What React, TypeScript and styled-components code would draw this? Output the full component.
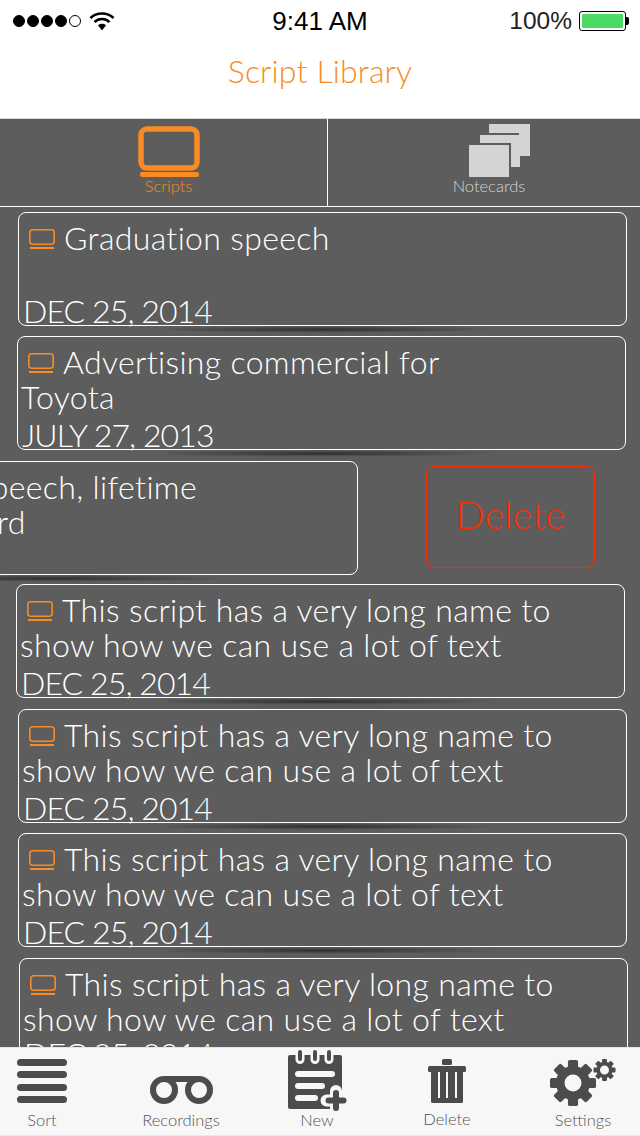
import React from 'react'
import styled, { createGlobalStyle } from 'styled-components'

const ORANGE = '#f88b24'
const GREY = '#5d5d5d'
const ICON = '#4c4c4c'
const FOOTER = '#f7f7f7'

const GlobalStyle = createGlobalStyle`
  html, body {
    margin: 0;
    padding: 0;
    background: #ffffff;
    overflow: hidden;
  }
  * {
    box-sizing: border-box;
  }
`

const Page = styled.div`
  display: flex;
  flex-direction: column;
  width: 640px;
  height: 1136px;
  overflow: hidden;
  font-family: Lato, 'Open Sans', sans-serif;
  font-weight: 300;
`

const StatusBar = styled.div`
  display: grid;
  grid-template-columns: 1fr auto 1fr;
  align-items: center;
  flex: none;
  height: 41px;
  padding: 1px 14px 0 13px;
  font-family: 'Liberation Sans', Arial, sans-serif;
  color: #000000;
`

const StatusLeft = styled.div`
  display: flex;
  align-items: center;
  gap: 8px;
`

const StatusRight = styled.div`
  display: flex;
  align-items: center;
  justify-content: flex-end;
  gap: 7px;
`

const Time = styled.div`
  margin-left: 1px;
  font-size: 26px;
`

const Percent = styled.div`
  font-size: 24.5px;
  color: #222222;
`

const Dots = styled.div`
  display: flex;
  gap: 2px;
`

const Dot = styled.div<{ $empty?: boolean }>`
  width: 12px;
  height: 12px;
  border-radius: 50%;
  border: 1px solid #000000;
  background: ${({ $empty }) => ($empty ? 'transparent' : '#000000')};
`

const Battery = styled.div`
  position: relative;
  width: 47px;
  height: 20px;
  padding: 2px;
  border: 1px solid #000000;
  border-radius: 3px;
  &::after {
    content: '';
    position: absolute;
    top: 5px;
    right: -4px;
    width: 3px;
    height: 8px;
    border-radius: 0 2px 2px 0;
    background: #000000;
  }
`

const BatteryFill = styled.div`
  height: 100%;
  background: #4cd964;
  border-radius: 1px;
`

const NavBar = styled.div`
  display: flex;
  align-items: center;
  justify-content: center;
  flex: none;
  height: 77px;
  padding-bottom: 19px;
  font-size: 32px;
  letter-spacing: 0.15px;
  color: ${ORANGE};
`

const TabBar = styled.div`
  display: grid;
  grid-template-columns: 328px 1fr;
  flex: none;
  height: 89px;
  background: ${GREY};
  border-top: 1px solid #d6d6d6;
  border-bottom: 1px solid #ffffff;
`

const Tab = styled.div<{ $active?: boolean }>`
  display: flex;
  flex-direction: column;
  align-items: center;
  justify-content: flex-end;
  padding: 0 0 11px 10px;
  color: ${({ $active }) => ($active ? ORANGE : '#d4d4d4')};
  border-right: ${({ $active }) => ($active ? '1px solid #ffffff' : 'none')};
`

const TabLabel = styled.div`
  font-size: 16.5px;
  line-height: 18px;
`

const TabIcon = styled.svg<{ $shift?: number }>`
  display: block;
  margin-left: ${({ $shift = 0 }) => $shift}px;
`

const List = styled.div`
  flex: 1;
  min-height: 0;
  overflow: hidden;
  padding-top: 5px;
  background: ${GREY};
`

const Row = styled.div<{ $left: number; $gap: number }>`
  display: flex;
  margin-left: ${({ $left }) => $left}px;
  margin-top: ${({ $gap }) => $gap}px;
`

const Card = styled.div`
  position: relative;
  display: flex;
  flex: none;
  flex-direction: column;
  justify-content: space-between;
  width: 609px;
  height: 114px;
  padding: 7px 0 0 3px;
  border: 1px solid #ffffff;
  border-radius: 8px;
  color: #ffffff;
  font-size: 32px;
  line-height: 35px;
  &::after {
    content: '';
    position: absolute;
    left: 150px;
    bottom: -8px;
    width: 340px;
    height: 7px;
    background: radial-gradient(ellipse at 45% 50%, rgba(0, 0, 0, 0.5), rgba(0, 0, 0, 0) 68%);
  }
`

const Title = styled.div`
  white-space: pre;
  letter-spacing: 0.35px;
`

const Date = styled.div<{ $lift?: number }>`
  padding-left: 1px;
  margin-bottom: ${({ $lift = 0 }) => $lift - 3}px;
  white-space: pre;
  letter-spacing: -0.9px;
`

const CardIcon = styled.svg`
  display: inline-block;
  vertical-align: 0;
  margin: 0 9px 0 7px;
`

const DeleteButton = styled.div`
  display: flex;
  align-items: center;
  justify-content: center;
  flex: none;
  width: 169px;
  height: 102px;
  margin: 5px 0 0 68px;
  padding-bottom: 6px;
  border: 1px solid #ff2a00;
  border-radius: 8px;
  box-shadow: 0 0 1px #ff2a00;
  color: #ff2a00;
  font-size: 38px;
`

const Footer = styled.div`
  display: grid;
  grid-template-columns: 84px 194px 78px 182px 90px;
  flex: none;
  height: 89px;
  background: ${FOOTER};
  border-top: 1px solid #e4e4e4;
  border-bottom: 1px solid #e8e8e8;
`

const FooterItem = styled.div<{ $bottom?: number }>`
  display: flex;
  flex-direction: column;
  align-items: center;
  justify-content: flex-end;
  padding-bottom: ${({ $bottom = 5 }) => $bottom}px;
  color: #555555;
`

const FooterIcon = styled.svg`
  display: block;
`

const FooterLabel = styled.div<{ $gap: number }>`
  margin-top: ${({ $gap }) => $gap}px;
  font-size: 16.5px;
  line-height: 18px;
`

const LaptopBig = () => (
  <TabIcon width="62" height="51" viewBox="0 0 62 51">
    <rect x="3" y="3" width="56" height="39" rx="6" fill="none" stroke={ORANGE} strokeWidth="5.5" />
    <rect x="2" y="46" width="59" height="5" rx="2" fill={ORANGE} />
  </TabIcon>
)

const Notecards = () => (
  <TabIcon $shift={21} width="61" height="53" viewBox="0 0 61 53">
    <rect x="20" y="0" width="41" height="32" fill="#d4d4d4" />
    <rect x="9" y="9" width="41" height="33" fill={GREY} />
    <rect x="11" y="11" width="40" height="32" fill="#d4d4d4" />
    <rect x="-2" y="19" width="44" height="36" fill={GREY} />
    <rect x="0" y="21" width="40" height="32" fill="#d4d4d4" />
  </TabIcon>
)

const LaptopSmall = () => (
  <CardIcon width="26" height="21" viewBox="0 0 26 21">
    <rect x="0.8" y="0.8" width="24.4" height="14.4" rx="3" fill="none" stroke={ORANGE} strokeWidth="1.6" />
    <rect x="1" y="18" width="24" height="2" fill={ORANGE} />
  </CardIcon>
)

const SignalWifi = () => (
  <svg width="26" height="20" viewBox="0 0 26 20">
    <path d="M1.5 7 C7.5 1 18.5 1 24.5 7" fill="none" stroke="#000" strokeWidth="2.6" />
    <path d="M5.5 11 C9.5 7 16.5 7 20.5 11" fill="none" stroke="#000" strokeWidth="2.6" />
    <path d="M9 14.2 C11.5 12.4 14.5 12.4 17 14.2 L13 19.5 Z" fill="#000" />
  </svg>
)

const SortIcon = () => (
  <FooterIcon width="50" height="44" viewBox="0 0 50 44">
    {[0, 12, 25, 37].map(y => (
      <rect key={y} x="0" y={y} width="50" height="7" rx="3.5" fill={ICON} />
    ))}
  </FooterIcon>
)

const RecordingsIcon = () => (
  <FooterIcon width="63" height="28" viewBox="0 0 63 28">
    <circle cx="14" cy="14" r="11" fill="none" stroke={ICON} strokeWidth="6" />
    <circle cx="49" cy="14" r="11" fill="none" stroke={ICON} strokeWidth="6" />
    <rect x="14" y="0" width="35" height="6" fill={ICON} />
  </FooterIcon>
)

const NewIcon = () => (
  <FooterIcon width="60" height="61" viewBox="0 0 60 61">
    <rect x="1" y="5" width="54" height="54" rx="2" fill={ICON} />
    {[13, 28, 42].map(x => (
      <React.Fragment key={x}>
        <rect x={x - 4.5} y="0" width="9" height="14" rx="4.5" fill={FOOTER} />
        <rect x={x - 2} y="0" width="4" height="11" rx="2" fill={ICON} />
      </React.Fragment>
    ))}
    <rect x="8" y="21" width="40" height="6" rx="3" fill={FOOTER} />
    <rect x="8" y="33" width="30" height="6" rx="3" fill={FOOTER} />
    <rect x="8" y="45" width="23" height="6" rx="3" fill={FOOTER} />
    <path d="M49 41 v19 M39.5 50.5 h19" stroke={FOOTER} strokeWidth="12" strokeLinecap="round" />
    <path d="M49 43 v15 M41.5 50.5 h15" stroke={ICON} strokeWidth="6" strokeLinecap="round" />
  </FooterIcon>
)

const TrashIcon = () => (
  <FooterIcon width="38" height="44" viewBox="0 0 38 44">
    <rect x="14" y="0" width="10" height="6" rx="1.5" fill={ICON} />
    <rect x="0" y="7" width="38" height="6" rx="1.5" fill={ICON} />
    <rect x="3" y="12" width="32" height="32" rx="1.5" fill={ICON} />
    {[10, 18, 27].map(x => (
      <rect key={x} x={x} y="13" width="2" height="26" fill={FOOTER} />
    ))}
  </FooterIcon>
)

const Gear = ({ cx, cy, r, hole }: { cx: number; cy: number; r: number; hole: number }) => (
  <g transform={`translate(${cx} ${cy})`}>
    <circle r={(r * 0.74 + hole) / 2} fill="none" stroke={ICON} strokeWidth={r * 0.74 - hole} />
    {[0, 45, 90, 135, 180, 225, 270, 315].map(a => (
      <rect
        key={a}
        x={-r * 0.22}
        y={-r}
        width={r * 0.44}
        height={r * 0.4}
        rx={r * 0.08}
        fill={ICON}
        transform={`rotate(${a})`}
      />
    ))}
  </g>
)

const SettingsIcon = () => (
  <FooterIcon width="66" height="47" viewBox="0 0 66 47">
    <Gear cx={23} cy={24} r={23} hole={8.5} />
    <Gear cx={54.5} cy={11} r={11} hole={4.5} />
  </FooterIcon>
)

interface Script {
  title: string
  date: string
  left: number
  gap: number
  lift?: number
  swiped?: boolean
}

const scripts: Script[] = [
  { title: 'Graduation speech', date: 'DEC 25, 2014', left: 18, gap: 0 },
  { title: 'Advertising commercial for\nToyota', date: 'JULY 27, 2013', left: 17, gap: 10 },
  { title: 'Introduction speech, lifetime\nachievement award', date: 'DEC 25, 2014', left: -251, gap: 11, swiped: true },
  { title: 'This script has a very long name to\nshow how we can use a lot of text', date: 'DEC 25, 2014', left: 16, gap: 9 },
  { title: 'This script has a very long name to\nshow how we can use a lot of text', date: 'DEC 25, 2014', left: 18, gap: 11 },
  { title: 'This script has a very long name to\nshow how we can use a lot of text', date: 'DEC 25, 2014', left: 18, gap: 10 },
  { title: 'This script has a very long name to\nshow how we can use a lot of text', date: 'DEC 25, 2014', left: 19, gap: 11, lift: 7 },
]

const App = () => (
  <Page>
    <GlobalStyle />
    <StatusBar>
      <StatusLeft>
        <Dots>
          {[0, 1, 2, 3].map(i => (
            <Dot key={i} />
          ))}
          <Dot $empty />
        </Dots>
        <SignalWifi />
      </StatusLeft>
      <Time>9:41 AM</Time>
      <StatusRight>
        <Percent>100%</Percent>
        <Battery>
          <BatteryFill />
        </Battery>
      </StatusRight>
    </StatusBar>
    <NavBar>Script Library</NavBar>
    <TabBar>
      <Tab $active>
        <LaptopBig />
        <TabLabel>Scripts</TabLabel>
      </Tab>
      <Tab>
        <Notecards />
        <TabLabel>Notecards</TabLabel>
      </Tab>
    </TabBar>
    <List>
      {scripts.map(s => (
        <Row key={s.left + s.title} $left={s.left} $gap={s.gap}>
          <Card>
            <Title>
              <LaptopSmall />
              {s.title}
            </Title>
            <Date $lift={s.lift}>{s.date}</Date>
          </Card>
          {s.swiped && <DeleteButton>Delete</DeleteButton>}
        </Row>
      ))}
    </List>
    <Footer>
      <FooterItem $bottom={6}>
        <SortIcon />
        <FooterLabel $gap={8}>Sort</FooterLabel>
      </FooterItem>
      <FooterItem $bottom={6}>
        <RecordingsIcon />
        <FooterLabel $gap={7}>Recordings</FooterLabel>
      </FooterItem>
      <FooterItem $bottom={6}>
        <NewIcon />
        <FooterLabel $gap={0}>New</FooterLabel>
      </FooterItem>
      <FooterItem $bottom={7}>
        <TrashIcon />
        <FooterLabel $gap={7}>Delete</FooterLabel>
      </FooterItem>
      <FooterItem $bottom={6}>
        <SettingsIcon />
        <FooterLabel $gap={5}>Settings</FooterLabel>
      </FooterItem>
    </Footer>
  </Page>
)

export default App
